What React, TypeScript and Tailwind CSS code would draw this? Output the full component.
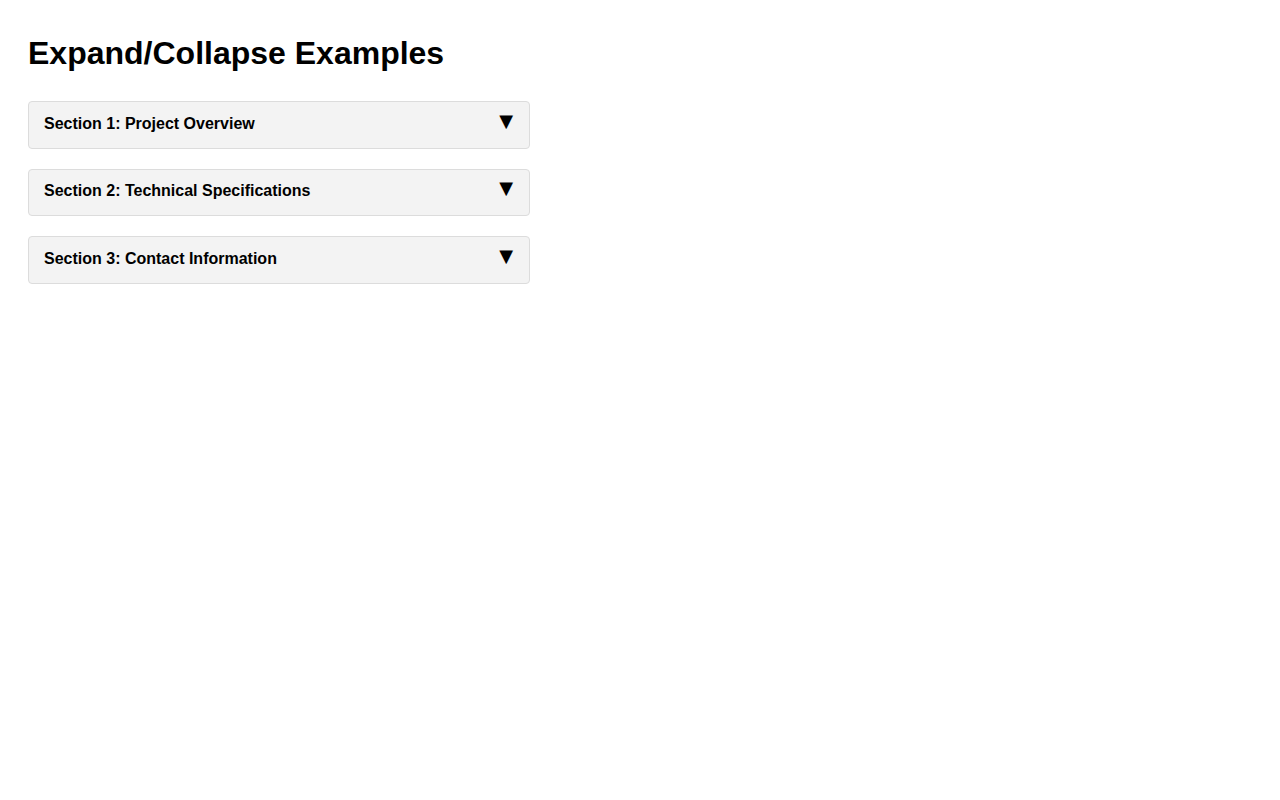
import { useState } from "react";

const SECTIONS = [
  {
    title: "Section 1: Project Overview",
    body: "An overview of the project goals, timeline and the team responsible for delivery.",
  },
  {
    title: "Section 2: Technical Specifications",
    body: "Details on the stack, supported platforms and performance requirements.",
  },
  {
    title: "Section 3: Contact Information",
    body: "Reach the project lead by email or through the team channel.",
  },
];

function Section({ title, body }: { title: string; body: string }) {
  const [open, setOpen] = useState(false);

  return (
    <div className="rounded border border-[#dcdcdc] bg-[#f3f3f3]">
      <button
        type="button"
        onClick={() => setOpen(!open)}
        className="flex w-full items-start justify-between pl-[15px] pr-[16px] pt-[9.5px] pb-[12px] text-left"
      >
        <span className="text-[16px] leading-[24px] font-bold text-black">{title}</span>
        <span className="font-['DejaVu_Sans',sans-serif] text-[18px] leading-none text-black">
          {open ? "▲" : "▼"}
        </span>
      </button>
      {open && <div className="px-[15px] pb-3 text-[16px] text-[#333]">{body}</div>}
    </div>
  );
}

export default function App() {
  return (
    <div className="min-h-screen bg-white px-7 pt-[35px] font-['Liberation_Sans',Arial,sans-serif] text-black">
      <h1 className="mb-[29px] text-[32px] leading-[37px] font-bold">Expand/Collapse Examples</h1>
      <div className="flex w-[502px] flex-col gap-5">
        {SECTIONS.map((s) => (
          <Section key={s.title} title={s.title} body={s.body} />
        ))}
      </div>
    </div>
  );
}
